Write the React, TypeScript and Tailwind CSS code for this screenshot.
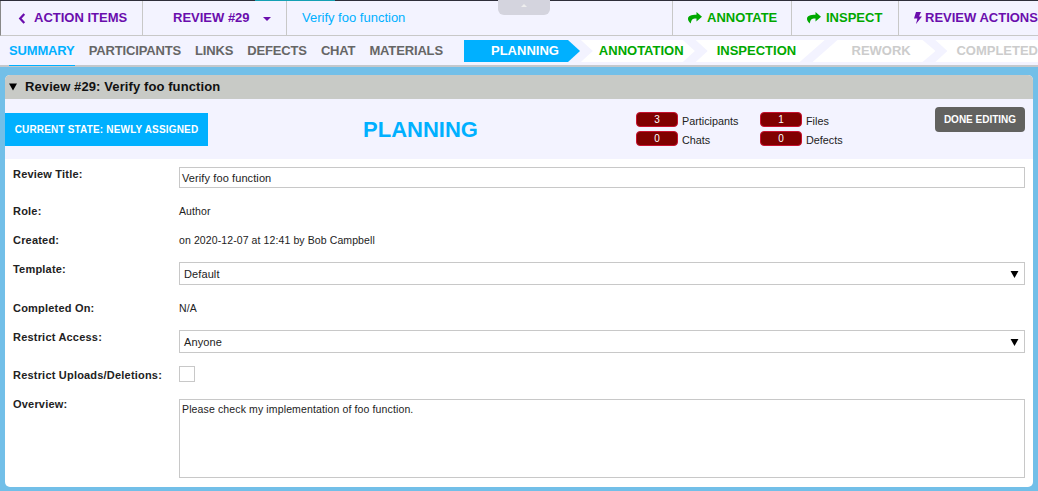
import React from "react";

const F = "font-['Liberation_Sans',Arial,sans-serif]";

function Share() {
  return (
    <svg viewBox="0 0 14 12" className="w-[14px] h-[12px] fill-current shrink-0" aria-hidden="true">
      <path d="M8.5 0 14 4.7 8.5 9.4V6.6C5 6.4 3.2 7.6 2.8 11.6 0.8 9.9 0 8.3 0 6.8 0 4 3 2.8 8.5 2.8Z" />
    </svg>
  );
}

function Badge({ n, label }: { n: number; label: string }) {
  return (
    <div className="flex items-center h-[15px] w-[124px]">
      <div className="w-[42px] h-[15px] rounded-[4px] bg-[#800000] border border-[#c8102e] text-white text-[10px] leading-[14px] text-center">{n}</div>
      <span className="ml-[4px] mt-[3px] text-[10.8px] text-[#222]">{label}</span>
    </div>
  );
}

function Label({ children }: { children: React.ReactNode }) {
  return <div className="w-[166px] shrink-0 font-bold text-[11px] tracking-[0.2px] leading-[13px] text-[#222]">{children}</div>;
}

function Select({ value }: { value: string }) {
  return (
    <div className="flex-1 -mt-[1px] h-[23px] border border-[#c8c8c8] bg-white flex items-center pl-[4px] pr-[5px] pt-[1px] text-[11px] text-[#222]">
      <span className="flex-1">{value}</span>
      <svg viewBox="0 0 9 8" className="w-[9px] h-[7px] fill-black" aria-hidden="true"><path d="M0 0h9L4.5 8Z" /></svg>
    </div>
  );
}

export default function App() {
  return (
    <div className={`${F} relative w-[1038px] h-[491px] overflow-hidden bg-[#72bfe8]`}>
      <div className="h-[1px] bg-[#2e2e3a]" />
      <div className="absolute top-0 left-[255px] w-[80px] h-[1px] bg-[#14a0b4]" />
      <div className="absolute top-0 left-[498px] w-[52px] h-[15px] bg-[#d4d4de] rounded-b-[6px] flex justify-center">
        <span className="mt-[4px] w-0 h-0 border-x-[3px] border-x-transparent border-b-[3px] border-b-[#eeeeee]" />
      </div>

      <div className="h-[35px] flex bg-[#f3f3ff] border-b border-[#c8c8c8] border-l border-l-[#888] font-bold text-[13px]">
        <div className="w-[142px] flex items-center pl-[17px] text-[#6a0dad] border-r border-[#c8c8c8]">
          <svg viewBox="0 0 8 12" className="w-[8px] h-[11px] mr-[8px]" aria-hidden="true"><path d="M6.5 1 2 6l4.5 5" fill="none" stroke="currentColor" strokeWidth="2.4" /></svg>
          ACTION ITEMS
        </div>
        <div className="w-[144px] flex items-center pl-[30px] text-[#6a0dad] border-r border-[#c8c8c8]">
          REVIEW #29
          <span className="ml-[13px] mt-[1px] w-0 h-0 border-x-[4px] border-x-transparent border-t-[4px] border-t-[#6a0dad]" />
        </div>
        <div className="flex-1 flex items-center pl-[15px] text-[#00b0ff] font-normal text-[13px]">Verify foo function</div>
        <div className="w-[119px] flex items-center pl-[15px] gap-[5px] text-[#00a800] border-l border-[#c8c8c8]"><Share />ANNOTATE</div>
        <div className="w-[107px] flex items-center pl-[15px] gap-[5px] text-[#00a800] border-l border-[#c8c8c8]"><Share />INSPECT</div>
        <div className="w-[140px] flex items-center pl-[15px] text-[#6a0dad] border-l border-[#c8c8c8] whitespace-nowrap">
          <svg viewBox="0 0 8 12" className="w-[8px] h-[12px] mr-[3px] fill-current shrink-0" aria-hidden="true"><path d="M2 0h5L5 4.5h3L2 12l1.4-5.6H0Z" /></svg>
          REVIEW ACTIONS
        </div>
      </div>

      <div className="h-[31px] flex bg-[#f3f3ff] border-b-2 border-[#c4c8cc] font-bold text-[13px]">
        <div className="w-[464px] flex items-stretch pl-[9px] gap-[14px] tracking-[-0.15px] text-[#666666]">
          <span className="h-[30px] leading-[30px] text-[#00b0ff] border-b border-[#00b0ff]">SUMMARY</span>
          <span className="leading-[30px]">PARTICIPANTS</span>
          <span className="leading-[30px]">LINKS</span>
          <span className="leading-[30px]">DEFECTS</span>
          <span className="leading-[30px]">CHAT</span>
          <span className="leading-[30px]">MATERIALS</span>
        </div>
        <div className="flex items-start pt-[4px] flex-1 min-w-0 whitespace-nowrap">
          <div className="w-[117px] h-[22px] leading-[22px] pl-[27px] bg-[#00b0ff] text-white [clip-path:polygon(0_0,104px_0,116px_50%,104px_100%,0_100%)]">PLANNING</div>
          <div className="w-[115px] h-[22px] leading-[22px] pl-[18px] bg-white text-[#00a800] [clip-path:polygon(0_0,102px_0,114px_50%,102px_100%,0_100%,12px_50%)]">ANNOTATION</div>
          <div className="w-[129px] h-[22px] leading-[22px] pl-[21px] bg-white text-[#00a800] [clip-path:polygon(0_0,129px_0,104px_100%,0_100%,12px_50%)]">INSPECTION</div>
          <div className="w-[123px] h-[22px] leading-[22px] pl-[39px] -ml-[12px] bg-white text-[#cccccc] [clip-path:polygon(25px_0,110px_0,123px_50%,110px_100%,0_100%)]">REWORK</div>
          <div className="flex-1 h-[22px] leading-[22px] pl-[21px] bg-white text-[#cccccc] [clip-path:polygon(0_0,100%_0,100%_100%,0_100%,12px_50%)]">COMPLETED</div>
        </div>
      </div>

      <div className="mt-[8px] mx-[5px] h-[412px] rounded-[5px] bg-white overflow-hidden">
        <div className="h-[24px] bg-[#c8cac6] flex items-center pl-[4px] font-bold text-[13px] tracking-[0.1px] text-[#111]">
          <svg viewBox="0 0 9 8" className="w-[8px] h-[8px] mr-[8px] fill-black" aria-hidden="true"><path d="M0 0h9L4.5 8Z" /></svg>
          Review #29: Verify foo function
        </div>
        <div className="h-[60px] bg-[#f3f3ff] flex items-start">
          <div className="mt-[14px] w-[203px] h-[33px] bg-[#00b0ff] text-white font-bold text-[10px] tracking-[0.17px] flex items-center justify-center">CURRENT STATE: NEWLY ASSIGNED</div>
          <div className="mt-[18px] ml-[155px] w-[115px] text-center text-[#00b0ff] font-bold text-[22px] leading-[25px]">PLANNING</div>
          <div className="ml-[158px] mt-[13px] w-[124px] flex flex-col gap-[4px]">
            <Badge n={3} label="Participants" />
            <Badge n={0} label="Chats" />
          </div>
          <div className="mt-[13px] w-[175px] flex flex-col gap-[4px]">
            <Badge n={1} label="Files" />
            <Badge n={0} label="Defects" />
          </div>
          <div className="mt-[8px] w-[90px] h-[25px] rounded-[4px] bg-[#626260] text-white font-bold text-[10px] flex items-center justify-center">DONE EDITING</div>
        </div>
        <div className="pl-[8px] pr-[8px] text-[10.5px] tracking-[0.1px] leading-[13px] text-[#222]">
          <div className="flex items-start pt-[8px] h-[46px]">
            <div className="mt-[1px]"><Label>Review Title:</Label></div>
            <div className="flex-1 h-[21px] border border-[#c8c8c8] flex items-center pl-[2px] pt-[1px] text-[11px]">Verify foo function</div>
          </div>
          <div className="flex items-start h-[29px]"><Label>Role:</Label><span>Author</span></div>
          <div className="flex items-start h-[29px]"><Label>Created:</Label><span>on 2020-12-07 at 12:41 by Bob Campbell</span></div>
          <div className="flex items-start h-[39px]"><Label>Template:</Label><Select value="Default" /></div>
          <div className="flex items-start h-[29px]"><Label>Completed On:</Label><span>N/A</span></div>
          <div className="flex items-start h-[38px]"><Label>Restrict Access:</Label><Select value="Anyone" /></div>
          <div className="flex items-start h-[29px]"><Label>Restrict Uploads/Deletions:</Label><div className="w-[16px] h-[16px] -mt-[3px] border border-[#c8c8c8]" /></div>
          <div className="flex items-start"><Label>Overview:</Label><div className="flex-1 h-[79px] mt-[1px] border border-[#c8c8c8] pl-[2px] pt-[3px] tracking-[0.13px]">Please check my implementation of foo function.</div></div>
        </div>
      </div>
    </div>
  );
}
